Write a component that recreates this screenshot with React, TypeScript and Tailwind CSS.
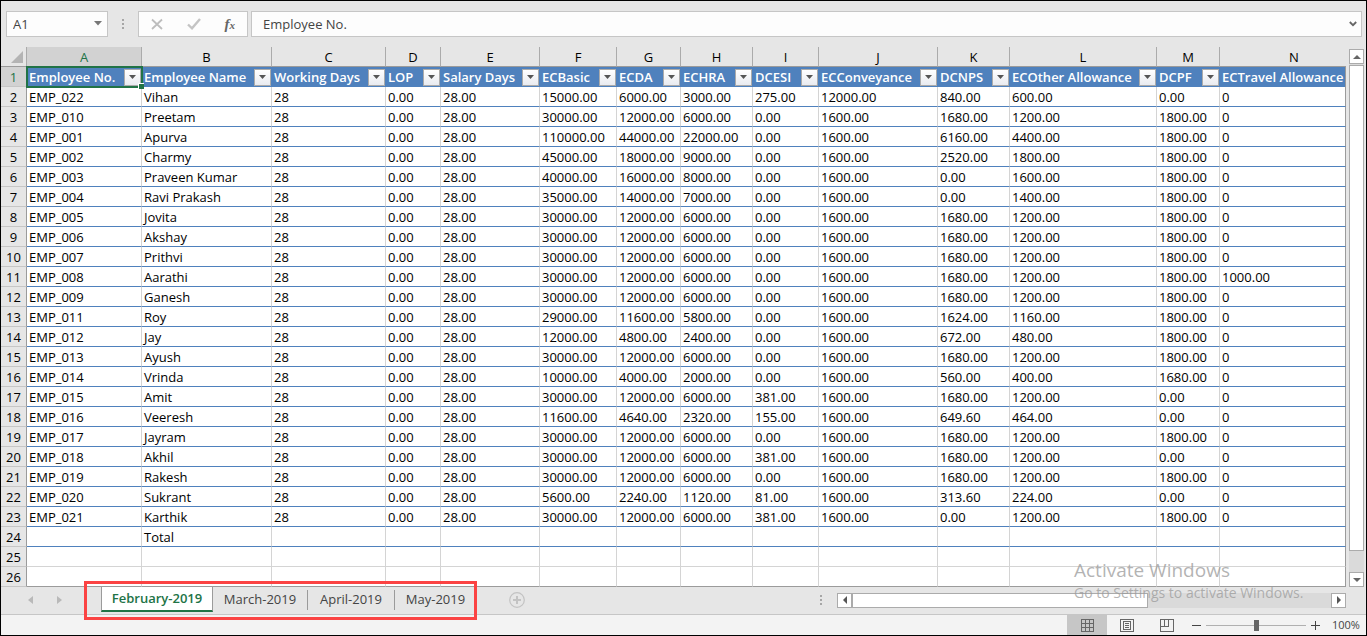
import { useState } from 'react';
import clsx from 'clsx';

type Column = { letter: string; title: string; width: string; filter: boolean };

const columns: Column[] = [
  { letter: 'A', title: 'Employee No.', width: 'w-[115px]', filter: true },
  { letter: 'B', title: 'Employee Name', width: 'w-[130px]', filter: true },
  { letter: 'C', title: 'Working Days', width: 'w-[114px]', filter: true },
  { letter: 'D', title: 'LOP', width: 'w-[55px]', filter: true },
  { letter: 'E', title: 'Salary Days', width: 'w-[99px]', filter: true },
  { letter: 'F', title: 'ECBasic', width: 'w-[77px]', filter: true },
  { letter: 'G', title: 'ECDA', width: 'w-[64px]', filter: true },
  { letter: 'H', title: 'ECHRA', width: 'w-[72px]', filter: true },
  { letter: 'I', title: 'DCESI', width: 'w-[66px]', filter: true },
  { letter: 'J', title: 'ECConveyance', width: 'w-[119px]', filter: true },
  { letter: 'K', title: 'DCNPS', width: 'w-[72px]', filter: true },
  { letter: 'L', title: 'ECOther Allowance', width: 'w-[147px]', filter: true },
  { letter: 'M', title: 'DCPF', width: 'w-[63px]', filter: true },
  { letter: 'N', title: 'ECTravel Allowance', width: 'w-auto', filter: false },
];

const rows: string[][] = [
  ['EMP_022', 'Vihan', '28', '0.00', '28.00', '15000.00', '6000.00', '3000.00', '275.00', '12000.00', '840.00', '600.00', '0.00', '0'],
  ['EMP_010', 'Preetam', '28', '0.00', '28.00', '30000.00', '12000.00', '6000.00', '0.00', '1600.00', '1680.00', '1200.00', '1800.00', '0'],
  ['EMP_001', 'Apurva', '28', '0.00', '28.00', '110000.00', '44000.00', '22000.00', '0.00', '1600.00', '6160.00', '4400.00', '1800.00', '0'],
  ['EMP_002', 'Charmy', '28', '0.00', '28.00', '45000.00', '18000.00', '9000.00', '0.00', '1600.00', '2520.00', '1800.00', '1800.00', '0'],
  ['EMP_003', 'Praveen Kumar', '28', '0.00', '28.00', '40000.00', '16000.00', '8000.00', '0.00', '1600.00', '0.00', '1600.00', '1800.00', '0'],
  ['EMP_004', 'Ravi Prakash', '28', '0.00', '28.00', '35000.00', '14000.00', '7000.00', '0.00', '1600.00', '0.00', '1400.00', '1800.00', '0'],
  ['EMP_005', 'Jovita', '28', '0.00', '28.00', '30000.00', '12000.00', '6000.00', '0.00', '1600.00', '1680.00', '1200.00', '1800.00', '0'],
  ['EMP_006', 'Akshay', '28', '0.00', '28.00', '30000.00', '12000.00', '6000.00', '0.00', '1600.00', '1680.00', '1200.00', '1800.00', '0'],
  ['EMP_007', 'Prithvi', '28', '0.00', '28.00', '30000.00', '12000.00', '6000.00', '0.00', '1600.00', '1680.00', '1200.00', '1800.00', '0'],
  ['EMP_008', 'Aarathi', '28', '0.00', '28.00', '30000.00', '12000.00', '6000.00', '0.00', '1600.00', '1680.00', '1200.00', '1800.00', '1000.00'],
  ['EMP_009', 'Ganesh', '28', '0.00', '28.00', '30000.00', '12000.00', '6000.00', '0.00', '1600.00', '1680.00', '1200.00', '1800.00', '0'],
  ['EMP_011', 'Roy', '28', '0.00', '28.00', '29000.00', '11600.00', '5800.00', '0.00', '1600.00', '1624.00', '1160.00', '1800.00', '0'],
  ['EMP_012', 'Jay', '28', '0.00', '28.00', '12000.00', '4800.00', '2400.00', '0.00', '1600.00', '672.00', '480.00', '1800.00', '0'],
  ['EMP_013', 'Ayush', '28', '0.00', '28.00', '30000.00', '12000.00', '6000.00', '0.00', '1600.00', '1680.00', '1200.00', '1800.00', '0'],
  ['EMP_014', 'Vrinda', '28', '0.00', '28.00', '10000.00', '4000.00', '2000.00', '0.00', '1600.00', '560.00', '400.00', '1680.00', '0'],
  ['EMP_015', 'Amit', '28', '0.00', '28.00', '30000.00', '12000.00', '6000.00', '381.00', '1600.00', '1680.00', '1200.00', '0.00', '0'],
  ['EMP_016', 'Veeresh', '28', '0.00', '28.00', '11600.00', '4640.00', '2320.00', '155.00', '1600.00', '649.60', '464.00', '0.00', '0'],
  ['EMP_017', 'Jayram', '28', '0.00', '28.00', '30000.00', '12000.00', '6000.00', '0.00', '1600.00', '1680.00', '1200.00', '1800.00', '0'],
  ['EMP_018', 'Akhil', '28', '0.00', '28.00', '30000.00', '12000.00', '6000.00', '381.00', '1600.00', '1680.00', '1200.00', '0.00', '0'],
  ['EMP_019', 'Rakesh', '28', '0.00', '28.00', '30000.00', '12000.00', '6000.00', '0.00', '1600.00', '1680.00', '1200.00', '1800.00', '0'],
  ['EMP_020', 'Sukrant', '28', '0.00', '28.00', '5600.00', '2240.00', '1120.00', '81.00', '1600.00', '313.60', '224.00', '0.00', '0'],
  ['EMP_021', 'Karthik', '28', '0.00', '28.00', '30000.00', '12000.00', '6000.00', '381.00', '1600.00', '0.00', '1200.00', '1800.00', '0'],
  ['', 'Total', '', '', '', '', '', '', '', '', '', '', '', ''],
];

const sheets = ['February-2019', 'March-2019', 'April-2019', 'May-2019'];

function Grip() {
  return (
    <svg width="2" height="10" viewBox="0 0 2 10" fill="#a6a6a6" shapeRendering="crispEdges" aria-hidden="true">
      <path d="M0 0h2v2H0zM0 4h2v2H0zM0 8h2v2H0z" />
    </svg>
  );
}

function FormulaBar() {
  return (
    <div className="flex items-center pt-[10px] pr-1 pb-[10px] pl-[5px] text-[13px] text-[#444]">
      <div className="flex h-[26px] w-[102px] items-center border border-[#c6c6c6] bg-[#fdfdfd]">
        <input aria-label="Name box" defaultValue="A1" className="w-0 flex-1 bg-transparent pt-px pl-[6px] outline-none" />
        <button aria-label="Show names" className="flex h-full w-[18px] items-center justify-center pb-[2px]">
          <svg width="8" height="5" viewBox="0 0 8 5" fill="#777"><path d="M0 0h8L4 4.5z" /></svg>
        </button>
      </div>
      <div className="flex w-[30px] justify-center"><Grip /></div>
      <div className="flex h-[26px] w-[110px] items-center justify-around border border-[#c6c6c6] bg-[#fdfdfd]">
        <button aria-label="Cancel">
          <svg width="12" height="12" viewBox="0 0 12 12" fill="none" stroke="#bdbdbd" strokeWidth="1.8"><path d="M1 1.5l10 9.5M11 1.5L1 11" /></svg>
        </button>
        <button aria-label="Enter">
          <svg width="14" height="12" viewBox="0 0 14 12" fill="none" stroke="#c4c4c4" strokeWidth="2.4"><path d="M1 6.5l4 3.8L13 1" /></svg>
        </button>
        <button aria-label="Insert function" className="flex items-baseline font-['Liberation_Serif',serif] leading-4 font-bold text-[#666] italic">
          <span className="text-[15px]">f</span>
          <span className="text-[11px]">x</span>
        </button>
      </div>
      <div className="ml-[3px] flex h-[26px] flex-1 items-center border border-[#c6c6c6] bg-[#fdfdfd]">
        <input aria-label="Formula" defaultValue="Employee No." className="w-0 flex-1 bg-transparent pt-px pl-[11px] outline-none" />
        <button aria-label="Expand formula bar" className="flex h-full w-4 items-center justify-center">
          <svg width="8" height="6" viewBox="0 0 8 6" fill="none" stroke="#666" strokeWidth="1.8"><path d="M0.8 1L4 4.2L7.2 1" /></svg>
        </button>
      </div>
    </div>
  );
}

function RowNumber({ n, selected = false }: { n: number; selected?: boolean }) {
  return (
    <th
      scope="row"
      className={clsx(
        'border-r border-b border-r-[#9b9b9b] border-b-[#c6c6c6] p-0 pt-[2px] text-center font-normal',
        selected ? 'bg-[#d2d2d2] text-[#217346]' : 'bg-[#e6e6e6]',
      )}
    >
      {n}
    </th>
  );
}

function Sheet() {
  return (
    <table className="w-full table-fixed border-separate border-spacing-0 text-[13px] leading-[17px] text-black">
      <colgroup>
        <col className="w-[26px]" />
        {columns.map((c) => (
          <col key={c.letter} className={c.width} />
        ))}
      </colgroup>
      <thead>
        <tr className="h-5">
          <th className="border-r border-b border-r-[#ababab] border-b-[#9b9b9b] p-0">
            <button aria-label="Select all" className="flex h-[19px] w-full items-end justify-end pr-[3px] pb-[3px]">
              <svg width="12" height="12" viewBox="0 0 12 12" fill="#b4b4b4"><path d="M12 0v12H0z" /></svg>
            </button>
          </th>
          {columns.map((c, i) => (
            <th
              key={c.letter}
              scope="col"
              className={clsx(
                'border-b border-b-[#9b9b9b] p-0 pt-[2px] text-center font-normal',
                c.letter === 'N' ? 'pl-[22px]' : 'border-r border-r-[#ababab]',
                i === 0 && 'bg-[#d2d2d2] text-[#217346]',
              )}
            >
              {c.letter}
            </th>
          ))}
        </tr>
      </thead>
      <tbody>
        <tr className="h-5">
          <RowNumber n={1} selected />
          {columns.map((c, i) => (
            <th
              key={c.letter}
              scope="col"
              className={clsx(
                'bg-[#4f81bd] p-0 text-left font-semibold text-white',
                i === 0 && 'relative',
                c.letter === 'N' && 'border-r border-[#9b9b9b]',
              )}
            >
              <div className="flex h-5 items-center justify-between pl-[2px]">
                <span className="whitespace-nowrap">{c.title}</span>
                {c.filter && (
                  <button
                    aria-label={`Filter ${c.title}`}
                    className="mr-px flex h-[17px] w-[17px] shrink-0 items-center justify-center border border-[#ababab] bg-linear-to-b from-white to-[#e9ebf0]"
                  >
                    <svg width="7" height="4" viewBox="0 0 7 4" fill="#555"><path d="M0 0h7L3.5 4z" /></svg>
                  </button>
                )}
              </div>
              {i === 0 && (
                <div className="pointer-events-none absolute -inset-px border-2 border-[#217346]">
                  <div className="absolute -right-[3px] -bottom-[3px] h-[6px] w-[6px] border-t border-l border-white bg-[#217346]" />
                </div>
              )}
            </th>
          ))}
        </tr>
        {rows.map((row, r) => (
          <tr key={r} className="h-5">
            <RowNumber n={r + 2} />
            {row.map((value, i) => (
              <td
                key={i}
                className={clsx(
                  'border-r border-b border-b-[#4f81bd] bg-white p-0 pt-[2px] pl-[2px] whitespace-nowrap',
                  i === row.length - 1 ? 'border-r-[#9b9b9b]' : 'border-r-[#d4d4d4]',
                )}
              >
                {value}
              </td>
            ))}
          </tr>
        ))}
        {[25, 26].map((n) => (
          <tr key={n} className="h-5">
            <RowNumber n={n} />
            {columns.map((c) => (
              <td
                key={c.letter}
                className={clsx(
                  'border-r border-b bg-white p-0',
                  n === 26 ? 'border-b-[#9b9b9b]' : 'border-b-[#d4d4d4]',
                  c.letter === 'N' ? 'border-r-[#9b9b9b]' : 'border-r-[#d4d4d4]',
                )}
              />
            ))}
          </tr>
        ))}
      </tbody>
    </table>
  );
}

function VerticalScroll() {
  return (
    <div className="mt-[2px] mr-[2px] ml-[3px] flex w-[15px] shrink-0 flex-col bg-[#dadada]">
      <button aria-label="Scroll up" className="flex h-[15px] items-center justify-center border border-[#ababab] bg-white">
        <svg width="8" height="4" viewBox="0 0 8 4" fill="#666"><path d="M4 0l4 4H0z" /></svg>
      </button>
      <div className="mt-px mb-[21px] flex-1 border border-[#ababab] bg-white" />
      <button aria-label="Scroll down" className="flex h-[15px] items-center justify-center border border-[#ababab] bg-white">
        <svg width="8" height="4" viewBox="0 0 8 4" fill="#666"><path d="M4 4l4-4H0z" /></svg>
      </button>
    </div>
  );
}

function SheetTabs() {
  const [active, setActive] = useState(sheets[0]);

  return (
    <div className="relative flex h-7 items-start border-b border-[#c6c6c6] text-[13px]">
      <div className="flex h-[26px] w-[100px] items-center gap-6 pl-[27px]">
        <button aria-label="Previous sheet">
          <svg width="5" height="8" viewBox="0 0 5 8" fill="#b9b9b9"><path d="M5 0v8L0 4z" /></svg>
        </button>
        <button aria-label="Next sheet">
          <svg width="5" height="8" viewBox="0 0 5 8" fill="#b9b9b9"><path d="M0 0v8l5-4z" /></svg>
        </button>
      </div>
      <div role="tablist" className="flex items-center">
        {sheets.map((name, i) => (
          <button
            key={name}
            role="tab"
            aria-selected={name === active}
            onClick={() => setActive(name)}
            className={clsx(
              'whitespace-nowrap',
              name === active
                ? 'h-[25px] w-[112px] border-x border-b-2 border-x-[#9b9b9b] border-b-[#217346] bg-white font-semibold text-[#217346]'
                : 'h-5 border-r text-[#444]',
              name !== active && (i === sheets.length - 1 ? 'border-transparent' : 'border-[#9b9b9b]'),
              name !== active && (i === 1 ? 'w-[95px]' : i === 2 ? 'w-[87px]' : 'w-[82px]'),
            )}
          >
            {name}
          </button>
        ))}
      </div>
      <button aria-label="New sheet" className="ml-8 flex h-[26px] items-center">
        <svg width="16" height="16" viewBox="0 0 16 16" fill="none" stroke="#c3c3c3"><circle cx="8" cy="8" r="7.3" strokeWidth="1.2" /><path d="M4 8h8M8 4v8" strokeWidth="2" /></svg>
      </button>

      <div className="ml-auto flex h-[26px] w-[546px] items-center">
        <Grip />
        <div className="mr-5 ml-[15px] flex h-[15px] flex-1 bg-[#dadada]">
          <button aria-label="Scroll left" className="flex w-[15px] items-center justify-center border border-[#ababab] bg-white">
            <svg width="4" height="8" viewBox="0 0 4 8" fill="#555"><path d="M4 0v8L0 4z" /></svg>
          </button>
          <div className="w-[296px] border border-[#ababab] bg-white" />
          <button aria-label="Scroll right" className="ml-auto flex w-[15px] items-center justify-center border border-[#ababab] bg-white">
            <svg width="4" height="8" viewBox="0 0 4 8" fill="#555"><path d="M0 0v8l4-4z" /></svg>
          </button>
        </div>
      </div>

      {/* Callout around the month tabs */}
      <div className="pointer-events-none absolute -top-[6px] left-[83px] h-[39px] w-[393px] border-3 border-[#fb4343]" />

      {/* OS watermark */}
      <div className="pointer-events-none absolute -top-[30px] right-[30px] w-[262px] whitespace-nowrap text-[#9a9a9a]/75">
        <div className="text-[19px] leading-[26px]">Activate Windows</div>
        <div className="text-[14px] leading-5">Go to Settings to activate Windows.</div>
      </div>
    </div>
  );
}

function StatusBar() {
  return (
    <div className="flex h-5 items-center justify-end bg-[#f3f3f3] pr-[6px] text-[#444]">
      <button aria-label="Normal view" className="flex h-full w-10 items-center justify-center bg-[#c6c6c6]">
        <svg width="13" height="13" viewBox="0 0 13 13" fill="none" stroke="#666" shapeRendering="crispEdges"><path d="M.5.5h12v12H.5zM4.5.5v12M8.5.5v12M.5 4.5h12M.5 8.5h12" /></svg>
      </button>
      <button aria-label="Page layout" className="flex h-full w-10 items-center justify-center">
        <svg width="14" height="13" viewBox="0 0 14 13" fill="none" stroke="#666" shapeRendering="crispEdges"><path d="M.5.5h13v12H.5zM3.5 2.5h7v8h-7zM5 4.5h4M5 6.5h4M5 8.5h4" /></svg>
      </button>
      <button aria-label="Page break preview" className="flex h-full w-10 items-center justify-center">
        <svg width="14" height="13" viewBox="0 0 14 13" fill="none" stroke="#666" shapeRendering="crispEdges"><path d="M.5.5h13v12H.5zM.5 7.5h8M4.5.5v7M8.5.5v7" /></svg>
      </button>
      <button aria-label="Zoom out" className="ml-[5px] flex w-[9px] justify-center">
        <svg width="9" height="9" viewBox="0 0 9 9" stroke="#444" shapeRendering="crispEdges"><path d="M0 4.5h9" /></svg>
      </button>
      <input
        type="range"
        aria-label="Zoom"
        min={0}
        max={200}
        defaultValue={100}
        className="mx-[5px] h-3 w-[100px] appearance-none bg-[linear-gradient(#b0b0b0,#b0b0b0)] bg-[length:100%_1px] bg-center bg-no-repeat [&::-webkit-slider-thumb]:h-[11px] [&::-webkit-slider-thumb]:w-[5px] [&::-webkit-slider-thumb]:appearance-none [&::-webkit-slider-thumb]:bg-[#666]"
      />
      <button aria-label="Zoom in" className="flex w-[9px] justify-center">
        <svg width="9" height="9" viewBox="0 0 9 9" fill="none" stroke="#444" shapeRendering="crispEdges"><path d="M0 4.5h9M4.5 0v9" /></svg>
      </button>
      <span className="ml-3 w-7 text-[11px] whitespace-nowrap">100%</span>
    </div>
  );
}

export default function App() {
  return (
    <div className="flex min-h-screen flex-col overflow-hidden border border-black bg-[#e6e6e6] font-['Open_Sans',sans-serif]">
      <FormulaBar />
      <div className="flex">
        <div className="min-w-0 flex-1">
          <Sheet />
        </div>
        <VerticalScroll />
      </div>
      <SheetTabs />
      <StatusBar />
    </div>
  );
}
